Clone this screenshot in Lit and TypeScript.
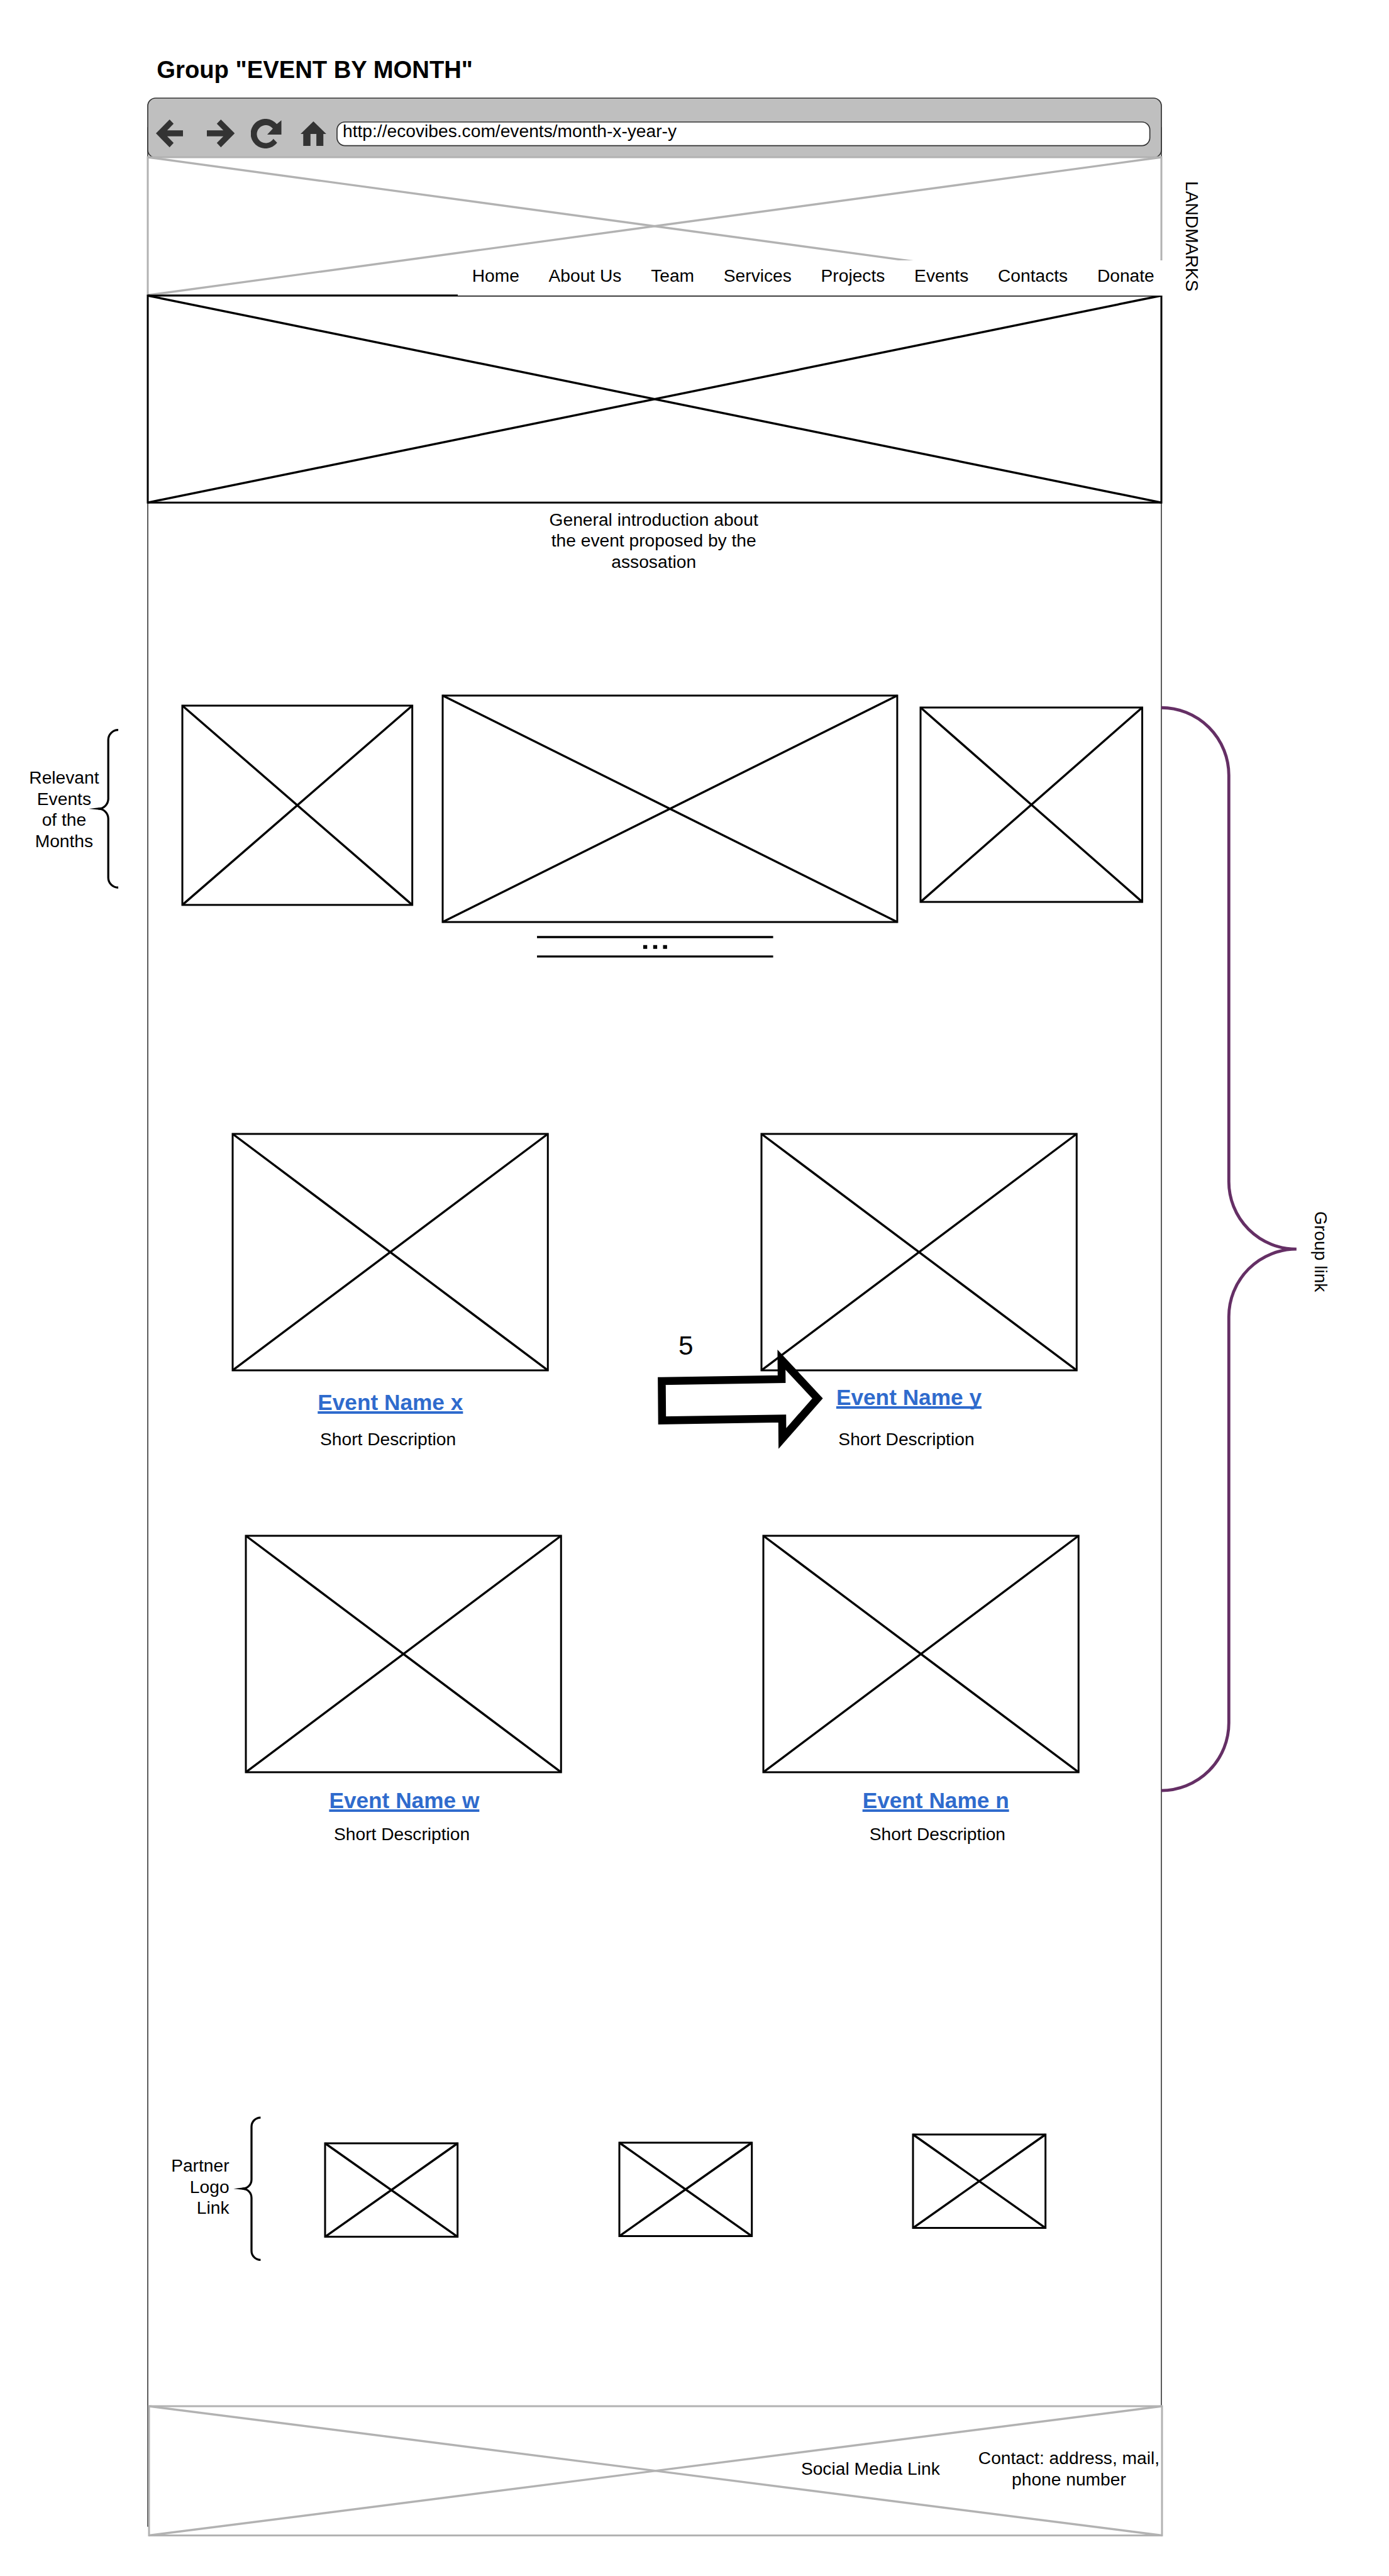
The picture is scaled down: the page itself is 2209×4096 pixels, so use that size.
import { LitElement, html, svg, css, unsafeCSS } from "lit";
import { customElement, property } from "lit/decorators.js";

// The wireframe is drawn in design units; one unit is SCALE css pixels.
const SCALE = 0.83545;
const px = (n: number) => `${+(n * SCALE).toFixed(3)}px`;
const u = (n: number) => unsafeCSS(px(n));

const NAV = ["Home", "About Us", "Team", "Services", "Projects", "Events", "Contacts", "Donate"];

interface EventCard {
  name: string;
  nameGap: number;
  nameShift: number;
  descGap: number;
  descShift: number;
}

const ROW_ONE: EventCard[] = [
  { name: "Event Name x", nameGap: 35.7, nameShift: -0.1, descGap: 24.5, descShift: -4.5 },
  { name: "Event Name y", nameGap: 26.3, nameShift: -19.2, descGap: 33.9, descShift: -24 },
];
const ROW_TWO: EventCard[] = [
  { name: "Event Name w", nameGap: 29, nameShift: 1.9, descGap: 18.5, descShift: -2.6 },
  { name: "Event Name n", nameGap: 29, nameShift: 27.7, descGap: 18.5, descShift: 31 },
];

/** Crossed rectangle standing in for a picture. */
@customElement("wire-box")
export class WireBox extends LitElement {
  @property() tone = "#000";

  static styles = css`
    :host {
      display: block;
    }
    .shape {
      display: block;
      width: 100%;
      height: 100%;
      overflow: visible;
    }
  `;

  render() {
    const edge = 3.6 * SCALE;
    const cross = 4.1 * SCALE;
    return html`<svg class="shape" stroke=${this.tone} stroke-width=${cross}>
      <rect width="100%" height="100%" fill="#fff" stroke-width=${edge}></rect>
      <line x1="0" y1="0" x2="100%" y2="100%"></line>
      <line x1="0" y1="100%" x2="100%" y2="0"></line>
    </svg>`;
  }
}

@customElement("app-root")
export class AppRoot extends LitElement {
  static styles = css`
    :host {
      display: block;
      width: 2209px;
      height: 4096px;
      position: relative;
      overflow: hidden;
      background: #fff;
      color: #000;
      font-family: "Liberation Sans", Arial, sans-serif;
      font-size: ${u(33.75)};
      line-height: ${u(40.5)};
    }
    .title {
      box-sizing: border-box;
      margin: 0;
      padding: ${u(105.4)} 0 0 ${u(298.4)};
      height: ${u(186)};
      font-size: ${u(45.75)};
      line-height: ${u(54.67)};
      font-weight: 700;
      white-space: nowrap;
    }
    .board {
      position: relative;
      isolation: isolate;
      display: flex;
      flex-direction: column;
      margin-left: ${u(281)};
      width: ${u(1929.5)};
    }
    .frame {
      position: absolute;
      z-index: -1;
      left: 0;
      top: ${u(57)};
      width: 100%;
      height: ${u(4565)};
      overflow: visible;
    }
    .chrome {
      position: relative;
      z-index: -1;
      display: flex;
      align-items: center;
      height: ${u(113.5)};
      box-sizing: border-box;
      padding: ${u(23.5)} ${u(22)} 0 ${u(15.7)};
    }
    .backdrop {
      position: absolute;
      left: 0;
      top: ${u(1)};
      width: 100%;
      height: ${u(113.5)};
      overflow: visible;
    }
    .icon {
      position: relative;
      flex: none;
      fill: #333;
    }
    .back {
      width: ${u(52.1)};
      height: ${u(53)};
    }
    .forward {
      width: ${u(53)};
      height: ${u(53)};
      margin-left: ${u(45.1)};
    }
    .reload {
      width: ${u(58.2)};
      height: ${u(57)};
      margin-left: ${u(31.1)};
    }
    .home {
      width: ${u(49)};
      height: ${u(47)};
      margin-left: ${u(35.6)};
    }
    .address {
      position: relative;
      flex: 1;
      height: ${u(45)};
      margin-left: ${u(20.6)};
    }
    .field {
      position: absolute;
      inset: 0;
      width: 100%;
      height: 100%;
      overflow: visible;
    }
    .url {
      position: relative;
      display: block;
      padding-left: ${u(11.1)};
      margin-top: ${u(-1.9)};
      white-space: nowrap;
    }
    .header,
    .footer {
      display: grid;
    }
    .header > *,
    .footer > * {
      grid-area: 1 / 1;
    }
    .header {
      height: ${u(262.5)};
    }
    .nav {
      position: relative;
      z-index: 1;
      align-self: end;
      justify-self: end;
      box-sizing: border-box;
      display: flex;
      justify-content: space-between;
      width: ${u(1342)};
      height: ${u(66)};
      margin-right: ${u(-3)};
      padding: ${u(9)} ${u(16)} 0 ${u(27)};
      background: #fff;
      white-space: nowrap;
    }
    .hero {
      height: ${u(394)};
    }
    .intro {
      margin: ${u(13)} 0 0;
      padding-right: ${u(2.5)};
      text-align: center;
    }
    .carousel {
      display: flex;
      align-items: flex-start;
      margin: ${u(233.5)} 0 0 ${u(65.9)};
    }
    .slide-left {
      width: ${u(437.7)};
      height: ${u(379.3)};
      margin: ${u(18.5)} ${u(58)} 0 0;
    }
    .slide-main {
      width: ${u(865.3)};
      height: ${u(431)};
    }
    .slide-right {
      width: ${u(422)};
      height: ${u(370)};
      margin: ${u(23)} 0 0 ${u(45)};
    }
    .pager {
      width: ${u(449.6)};
      height: ${u(37)};
      margin: ${u(28)} 0 0 ${u(741)};
      overflow: visible;
    }
    .events {
      display: flex;
      align-items: flex-start;
    }
    .row-one {
      margin: ${u(338.2)} 0 0 ${u(162.2)};
      gap: ${u(406.2)};
    }
    .row-two {
      margin: ${u(163.3)} 0 0 ${u(186.6)};
      gap: ${u(386)};
    }
    .card {
      display: flex;
      flex-direction: column;
      align-items: center;
      width: ${u(600)};
      white-space: nowrap;
    }
    .thumb {
      width: 100%;
      height: ${u(450)};
    }
    .name {
      color: #2f6bcd;
      font-size: ${u(42.19)};
      line-height: ${u(50.6)};
      font-weight: 700;
      text-decoration: underline;
      text-decoration-thickness: ${u(4.2)};
      text-underline-offset: ${u(2.6)};
      text-decoration-skip-ink: none;
    }
    .partners {
      display: flex;
      align-items: flex-start;
      margin-top: ${u(519.3)};
    }
    .partner-label {
      width: ${u(155.4)};
      margin-top: ${u(71)};
      text-align: right;
    }
    .partner-brace {
      flex: none;
      width: ${u(52)};
      height: ${u(271)};
      margin: 0 ${u(123)} 0 ${u(7.6)};
      overflow: visible;
    }
    .logo {
      width: ${u(252.2)};
      height: ${u(177.8)};
    }
    .logo-a {
      margin-top: ${u(48.2)};
    }
    .logo-b {
      margin: ${u(47)} ${u(307.2)} 0 ${u(307.3)};
    }
    .logo-c {
      margin-top: ${u(32)};
    }
    .footer {
      width: ${u(1928.3)};
      height: ${u(246)};
      margin: ${u(278)} 0 0 ${u(3)};
    }
    .footer-text {
      position: relative;
      display: flex;
      align-items: flex-start;
      justify-content: flex-end;
      white-space: nowrap;
    }
    .social {
      margin-top: ${u(99.7)};
    }
    .contact {
      margin: ${u(78.7)} ${u(5)} 0 ${u(73)};
      text-align: center;
    }
    .notes {
      position: absolute;
      left: 0;
      top: 0;
      width: 2209px;
      height: 4096px;
    }
    .note {
      position: absolute;
      white-space: nowrap;
    }
    .relevant {
      left: ${u(42)};
      top: ${u(1460)};
      width: ${u(160)};
      text-align: center;
    }
    .step {
      left: ${u(1291.5)};
      top: ${u(2531.5)};
      font-size: ${u(50.63)};
      line-height: ${u(60.75)};
    }
    .vertical {
      writing-mode: vertical-rl;
    }
    .landmarks {
      left: ${u(2248.5)};
      top: ${u(345)};
    }
    .group-link {
      left: ${u(2493)};
      top: ${u(2305)};
    }
  `;

  private brace(spine: number, end: number, tip: number, top: number, bottom: number) {
    const mid = (top + bottom) / 2;
    const r = end - spine;
    const nose = spine - r;
    return svg`
      <path fill="none" stroke="#000" stroke-width="3.9"
        d="M${end} ${top} A${r} ${r} 0 0 0 ${spine} ${top + r} V${mid - r} A${r} ${r} 0 0 1 ${nose} ${mid}
           A${r} ${r} 0 0 1 ${spine} ${mid + r} V${bottom - r} A${r} ${r} 0 0 0 ${end} ${bottom}"></path>
      <path d="M${nose + 5} ${mid - 2.6} L${nose} ${mid - 1.9} L${tip} ${mid} L${nose} ${mid + 1.9} L${nose + 5} ${mid + 2.6}Z"></path>`;
  }

  private card(c: EventCard) {
    return html`<article class="card">
      <wire-box class="thumb"></wire-box>
      <a class="name" style="margin-top:${px(c.nameGap)};margin-left:${px(c.nameShift * 2)}">${c.name}</a>
      <span style="margin-top:${px(c.descGap)};margin-left:${px(c.descShift * 2)}">Short Description</span>
    </article>`;
  }

  render() {
    return html`
      <h1 class="title">Group "EVENT BY MONTH"</h1>
      <main class="board">
        <svg class="frame">
          <rect width="100%" height="100%" fill="#fff" stroke="#333" stroke-width="1.6"></rect>
        </svg>

        <div class="chrome">
          <svg class="backdrop">
            <rect width="100%" height="100%" rx="12.5" fill="#bfbfbf" stroke="#333" stroke-width="1.7"></rect>
          </svg>
          <svg class="icon back" viewBox="296.2 228 52.1 53">
            <path d="M296.2 254.4L322.2 228L329.9 236L317.6 248.8H348.3V260H317.6L329.9 272.7L322.2 281Z"></path>
          </svg>
          <svg class="icon forward" viewBox="393.7 228 53 53">
            <path d="M446.7 254.4L420.4 228L412.6 236L425.1 248.8H393.7V260H425.1L412.6 272.7L420.4 281Z"></path>
          </svg>
          <svg class="icon reload" viewBox="477.9 226 58.2 57">
            <path d="M527.9 271.5A28.2 28.2 0 1 1 527.3 236L536 228.7V256H509L519.7 244.7A17 17 0 1 0 520.7 264Z"></path>
          </svg>
          <svg class="icon home" viewBox="571.7 231 49 47">
            <path d="M596.2 231L620.7 255H615.1V278H601.8V255H590.6V278H576.8V255H571.7Z"></path>
          </svg>
          <div class="address">
            <svg class="field"><rect width="100%" height="100%" rx="12.5" fill="#fff" stroke="#333" stroke-width="1.7"></rect></svg>
            <span class="url">http://ecovibes.com/events/month-x-year-y</span>
          </div>
        </div>

        <header class="header">
          <wire-box tone="#b2b2b2"></wire-box>
          <nav class="nav">${NAV.map((n) => html`<span>${n}</span>`)}</nav>
        </header>
        <wire-box class="hero"></wire-box>
        <p class="intro">General introduction about<br />the event proposed by the<br />assosation</p>

        <section class="carousel">
          <wire-box class="slide-left"></wire-box>
          <wire-box class="slide-main"></wire-box>
          <wire-box class="slide-right"></wire-box>
        </section>
        <svg class="pager" viewBox="0 0 449.6 37">
          <path stroke="#000" stroke-width="4" d="M0 0H449.6M0 37H449.6"></path>
          <path d="M202.2 15.3h7.6v7h-7.6zM221.2 15.3h7.6v7h-7.6zM240 15.3h7.6v7h-7.6z"></path>
        </svg>

        <section class="events row-one">${ROW_ONE.map((c) => this.card(c))}</section>
        <section class="events row-two">${ROW_TWO.map((c) => this.card(c))}</section>

        <section class="partners">
          <div class="partner-label">Partner<br />Logo<br />Link</div>
          <svg class="partner-brace" viewBox="444 4031 52 271">${this.brace(478.7, 496, 444.3, 4031, 4302)}</svg>
          <wire-box class="logo logo-a"></wire-box>
          <wire-box class="logo logo-b"></wire-box>
          <wire-box class="logo logo-c"></wire-box>
        </section>

        <footer class="footer">
          <wire-box tone="#b2b2b2"></wire-box>
          <div class="footer-text">
            <span class="social">Social Media Link</span>
            <span class="contact">Contact: address, mail,<br />phone number</span>
          </div>
        </footer>
      </main>

      <svg class="notes" viewBox="0 0 2644 4903">
        ${this.brace(206, 225, 168.9, 1389.3, 1689.3)}
        <path fill="none" stroke="#652f65" stroke-width="5.8"
          d="M2210.5 1347A128.7 128.7 0 0 1 2339.2 1475.7V2248.8A128.7 128.7 0 0 0 2468 2377.5A128.7 128.7 0 0 0 2339.2 2506.2V3279.3A128.7 128.7 0 0 1 2210.5 3408"></path>
        <path fill="#fff" stroke="#000" stroke-width="15"
          d="M1259.7 2628.6L1487.9 2625L1487.6 2587.9L1556.2 2661.6L1489.3 2737.9L1489 2700L1260.3 2703.6Z"></path>
      </svg>
      <div class="note relevant">Relevant<br />Events<br />of the<br />Months</div>
      <div class="note step">5</div>
      <div class="note vertical landmarks">LANDMARKS</div>
      <div class="note vertical group-link">Group link</div>
    `;
  }
}
